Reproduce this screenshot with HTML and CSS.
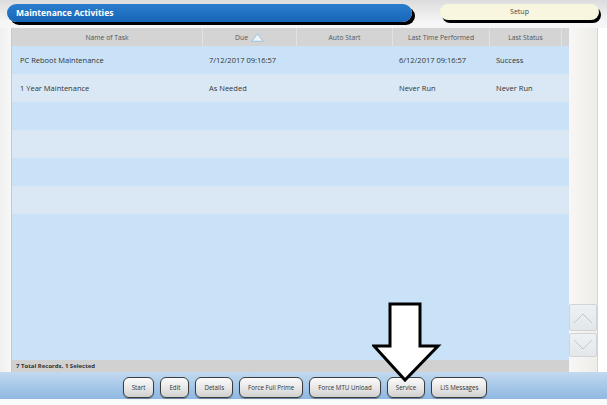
FILE: index.html
```html
<!DOCTYPE html>
<html lang="en">

<head>
    <meta charset="UTF-8">
    <title>Maintenance Activities</title>
    <link rel="stylesheet" href="styles.css">
</head>

<body>
    <div class="screen">
        <div class="topbar">
            <div class="titletab">Maintenance Activities</div>
            <div class="setuptab">Setup</div>
        </div>

        <div class="main">
            <div class="gutter"></div>
            <div class="grid">
                <div class="head">
                    <div class="hcell">Name of Task</div>
                    <div class="hcell">Due
                        <svg class="sorticon" width="13" height="9" viewBox="0 0 13 9">
                            <polygon points="6.5,0.8 12.2,8.3 0.8,8.3" fill="#eef4f8" stroke="#9cc3dc" stroke-width="1" />
                        </svg>
                    </div>
                    <div class="hcell">Auto Start</div>
                    <div class="hcell">Last Time Performed</div>
                    <div class="hcell">Last Status</div>
                    <div class="hcell last"></div>
                </div>
                <div class="rows">
                    <div class="row">
                        <div class="cell first">PC Reboot Maintenance</div>
                        <div class="cell">7/12/2017 09:16:57</div>
                        <div class="cell"></div>
                        <div class="cell">6/12/2017 09:16:57</div>
                        <div class="cell">Success</div>
                    </div>
                    <div class="row alt">
                        <div class="cell first">1 Year Maintenance</div>
                        <div class="cell">As Needed</div>
                        <div class="cell"></div>
                        <div class="cell">Never Run</div>
                        <div class="cell">Never Run</div>
                    </div>
                    <div class="row"></div>
                    <div class="row alt"></div>
                    <div class="row"></div>
                    <div class="row alt"></div>
                </div>
                <div class="status">7 Total Records, 1 Selected</div>
            </div>
            <div class="scroll">
                <div class="track"></div>
                <div class="sbtn up">
                    <svg width="20" height="12" viewBox="0 0 20 12">
                        <polyline points="1,11 10,2 19,11" fill="none" stroke="#c4c8cc" stroke-width="1" />
                    </svg>
                </div>
                <div class="sbtn down">
                    <svg width="20" height="12" viewBox="0 0 20 12">
                        <polyline points="1,1 10,10 19,1" fill="none" stroke="#c4c8cc" stroke-width="1" />
                    </svg>
                </div>
                <div class="sfoot"></div>
            </div>
            <div class="edge"></div>
        </div>

        <div class="buttonbar">
            <button class="btn">Start</button>
            <button class="btn">Edit</button>
            <button class="btn">Details</button>
            <button class="btn">Force Full Prime</button>
            <button class="btn">Force MTU Unload</button>
            <button class="btn">Service</button>
            <button class="btn">LIS Messages</button>
        </div>

        <!-- annotation arrow pointing at Service -->
        <svg class="callout" width="70" height="82" viewBox="0 0 70 82">
            <polygon points="18,2 48,2 48,44 66,44 33,78 2,44 18,44" fill="#fff" stroke="#000" stroke-width="3" stroke-linejoin="miter" />
        </svg>
    </div>
</body>

</html>
```

FILE: styles.css
```css
body {
    margin: 0;
    background: #fff;
    font-family: "Open Sans", "Noto Sans", sans-serif;
}

.screen {
    width: 607px;
    height: 405px;
    position: relative;
    display: flex;
    flex-direction: column;
    background: linear-gradient(to bottom, #dcdcdc 0, #f6f6f6 22px, #fafafa 100%);
}

.topbar {
    height: 28px;
    display: flex;
    align-items: flex-start;
    box-sizing: border-box;
    padding-top: 4px;
}

.titletab {
    margin-left: 7px;
    width: 405px;
    height: 18px;
    box-sizing: border-box;
    background: linear-gradient(to bottom, #2a7dcc, #1766b8);
    border-radius: 9px;
    box-shadow: 3px 3px 0 #000;
    color: #fff;
    font-weight: bold;
    font-size: 8.5px;
    line-height: 18px;
    padding-left: 9px;
}

.setuptab {
    margin-left: 28px;
    width: 159px;
    height: 16px;
    background: #f8f6de;
    border-radius: 8px;
    box-shadow: 2px 3px 0 #000;
    font-size: 7px;
    color: #444;
    text-align: center;
    line-height: 16px;
}

.main {
    flex: 1;
    display: flex;
}

.gutter {
    width: 11px;
    background: linear-gradient(to right, #f0f0f0, #f8f8f8);
}

.grid {
    width: 558px;
    display: flex;
    flex-direction: column;
    border-left: 1px solid #c8c8c8;
    box-sizing: border-box;
}

.head,
.row {
    display: grid;
    grid-template-columns: 191px 94px 96px 97px 72px 7px;
}

.head {
    height: 18px;
    background: #d4d4d4;
}

.hcell {
    font-size: 6.8px;
    color: #555;
    display: flex;
    align-items: center;
    justify-content: center;
    border-right: 1px solid #e2e2e2;
}

.hcell.last {
    border-right: 0;
}

.sorticon {
    margin-left: 3px;
}

.rows {
    flex: 1;
    background: #c9e2f8;
}

.row {
    height: 28px;
    background: #c9e2f8;
}

.row.alt {
    background: #dae8f5;
}

.cell {
    font-size: 7.5px;
    color: #333;
    display: flex;
    align-items: center;
    padding-left: 6px;
    white-space: nowrap;
}

.cell.first {
    padding-left: 8px;
}

.status {
    height: 12px;
    background: #d1d1d1;
    font-size: 6px;
    font-weight: bold;
    color: #333;
    line-height: 12px;
    padding-left: 4px;
}

.scroll {
    width: 28px;
    display: flex;
    flex-direction: column;
    background: linear-gradient(to right, #f8f7f5, #efede9);
    border-right: 1px solid #d4d4d4;
}

.track {
    flex: 1;
}

.sbtn {
    display: flex;
    align-items: center;
    justify-content: center;
    background: linear-gradient(to bottom, #eef1f3, #e2e7ea);
    border: 1px solid #d0d4d6;
    border-radius: 2px;
    box-sizing: border-box;
}

.sbtn.up {
    height: 27px;
    margin-bottom: 2px;
}

.sbtn.down {
    height: 24px;
}

.sfoot {
    height: 15px;
}

.edge {
    flex: 1;
    background: #fff;
}

.buttonbar {
    height: 27px;
    margin-bottom: 6px;
    box-sizing: border-box;
    padding: 0 0 1px 3px;
    display: flex;
    justify-content: center;
    align-items: flex-end;
    gap: 6px;
    background: linear-gradient(to bottom, #c2d9f0 0, #a3c5e8 60%, #8fb8e2 100%);
}

.btn {
    height: 21px;
    padding: 0 8px;
    font-family: "Open Sans", "Noto Sans", sans-serif;
    font-size: 6.2px;
    color: #333;
    background: linear-gradient(to bottom, #fbfbfb, #e4e4e4 60%, #cfcfcf);
    border: 1.5px solid #3c3c3c;
    border-radius: 6px;
    box-shadow: 0 1px 1px rgba(0, 0, 0, 0.3);
}

.callout {
    position: absolute;
    left: 372px;
    top: 302px;
}
```
